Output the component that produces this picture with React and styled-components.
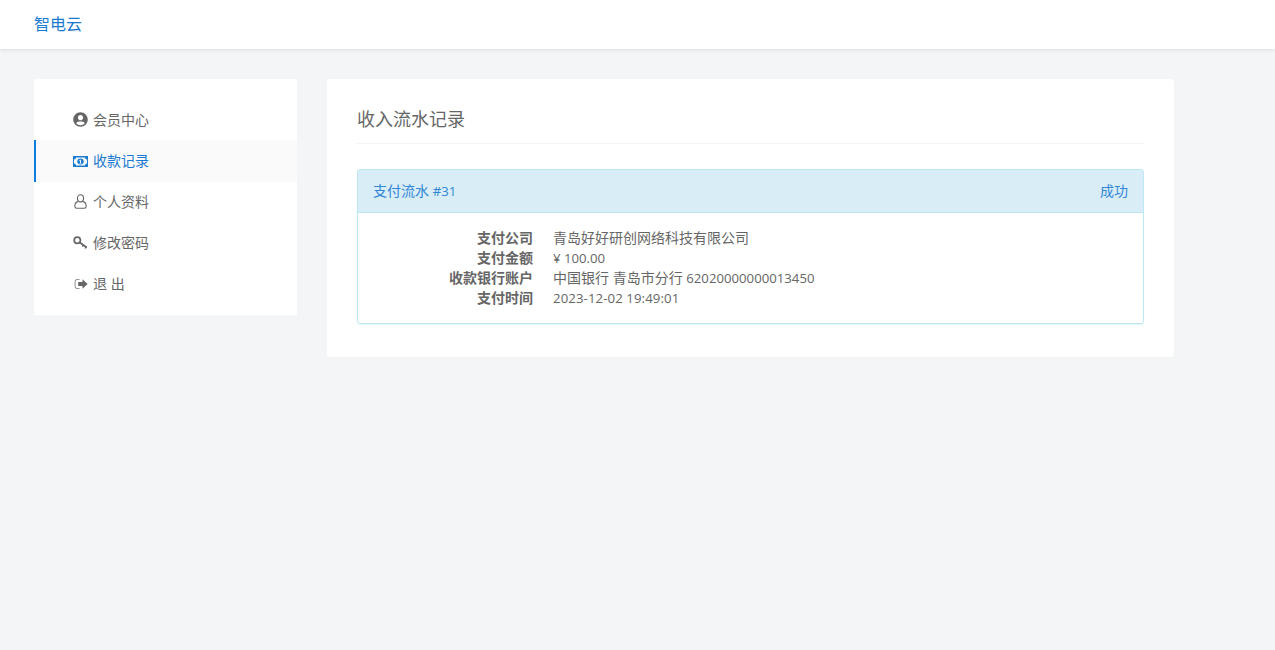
import React from 'react';
import styled, { createGlobalStyle } from 'styled-components';
import { FaUserCircle } from 'react-icons/fa';

const GlobalStyle = createGlobalStyle`
  html, body {
    margin: 0;
    height: 100%;
    background: #f4f5f7;
  }
  body {
    font-family: "Open Sans", "Noto Sans CJK SC", sans-serif;
    font-size: 14px;
    line-height: 20px;
    color: #666;
  }
`;

const Page = styled.div`
  min-height: 650px;
`;

const Header = styled.header`
  height: 49px;
  background: #fff;
  box-shadow: 0 1px 4px rgba(0, 0, 0, 0.1);
  display: flex;
  align-items: center;
  padding: 0 0 2px 34px;
  box-sizing: border-box;
`;

const Brand = styled.a`
  font-size: 16px;
  color: #1a7bd0;
`;

const Main = styled.main`
  display: flex;
  align-items: flex-start;
  gap: 30px;
  padding: 30px 0 0 34px;
`;

const Sidebar = styled.nav`
  width: 263px;
  background: #fff;
  padding: 20px 0 11px;
`;

const NavItem = styled.a`
  display: flex;
  align-items: center;
  gap: 5px;
  height: ${(p) => (p.$active ? '42px' : '41px')};
  margin-bottom: ${(p) => (p.$active ? '-1px' : '0')};
  padding-left: ${(p) => (p.$active ? '37px' : '39px')};
  border-left: ${(p) => (p.$active ? '2px solid #0d7be0' : 'none')};
  background: ${(p) => (p.$active ? '#fafafa' : 'transparent')};
  color: ${(p) => (p.$active ? '#1a7bd0' : '#666')};
`;

const NavIcon = styled.span`
  width: 15px;
  display: flex;
  justify-content: center;
  font-size: 15px;
`;

const Content = styled.section`
  width: 847px;
  box-sizing: border-box;
  background: #fff;
  border-radius: 3px;
  padding: 30px 30px 33px;
`;

const Title = styled.h2`
  margin: 0 0 25px;
  padding-bottom: 12px;
  height: 22px;
  font-size: 18px;
  line-height: 20px;
  font-weight: 400;
  color: #666;
  border-bottom: 1px solid #f3f3f3;
`;

const Card = styled.div`
  border: 1px solid #bce8f1;
  border-radius: 3px;
  box-shadow: 0 1px 1px rgba(188, 232, 241, 0.4);
`;

const CardHeader = styled.div`
  height: 43px;
  box-sizing: border-box;
  padding: 0 15px;
  display: flex;
  align-items: center;
  justify-content: space-between;
  background: #d9edf7;
  border-bottom: 1px solid #bce8f1;
  color: #2f86d6;
`;

const CardBody = styled.dl`
  margin: 0;
  padding: 15px;
  display: grid;
  grid-template-columns: 160px 1fr;
  column-gap: 20px;
`;

const Label = styled.dt`
  font-weight: 700;
  text-align: right;
`;

const Value = styled.dd`
  margin: 0;
`;

const Latin = styled.span`
  font-size: 13.2px;
`;

const DateText = styled(Latin)`
  letter-spacing: 0.1px;
`;

const MoneyIcon = () => (
  <svg width="15" height="11" viewBox="0 0 15 11" fill="currentColor">
    <path fillRule="evenodd" d="M0 0h15v11H0zM3 1.500C3 2.600 2.200 3.500 1 3.500v4c1.200 0 2 .9 2 2h9c0-1.100.8-2 2-2v-4c-1.200 0-2-.9-2-2z" />
    <ellipse cx="7.500" cy="5.500" rx="3.200" ry="3" />
    <path fill="#fafafa" d="M7 3.800h1v3.200h.6v.6H6.400V7H7V4.900l-.5.300-.3-.5z" />
  </svg>
);

const UserOutlineIcon = () => (
  <svg width="13" height="15" viewBox="0 0 13 15" fill="none" stroke="currentColor" strokeWidth="1.100">
    <ellipse cx="6.500" cy="4.300" rx="3.100" ry="3.600" />
    <path d="M4 7.600C2 8 .9 9.600.9 11.800v.7c0 1 .7 1.700 1.700 1.700h7.800c1 0 1.700-.7 1.700-1.700v-.7C12.100 9.600 11 8 9 7.600" />
  </svg>
);

const KeyIcon = () => (
  <svg width="15" height="13" viewBox="0 0 15 13" fill="none" stroke="currentColor">
    <circle cx="4.300" cy="4.300" r="3.100" strokeWidth="1.700" />
    <path d="M6.800 6.600 13.800 11.400" strokeWidth="1.800" />
    <path d="M10.300 9 9.300 10.700M13 10.800 12 12.500" strokeWidth="1.400" />
  </svg>
);

const SignOutIcon = () => (
  <svg width="14" height="12" viewBox="0 0 14 12" fill="currentColor">
    <path opacity="0.7" d="M5.500 1H3C1.600 1 .6 2 .6 3.400v5.200C.6 10 1.600 11 3 11h2.500V10H3c-.7 0-1.400-.7-1.400-1.400V3.400C1.600 2.700 2.300 2 3 2h2.500z" />
    <path d="M8.500 1.200 13.600 6l-5.100 4.800V8H4.200V4h4.300z" />
  </svg>
);

const navItems = [
  { text: '会员中心', icon: <FaUserCircle /> },
  { text: '收款记录', icon: <MoneyIcon />, active: true },
  { text: '个人资料', icon: <UserOutlineIcon /> },
  { text: '修改密码', icon: <KeyIcon /> },
  { text: '退 出', icon: <SignOutIcon /> },
];

const details = [
  ['支付公司', '青岛好好研创网络科技有限公司'],
  ['支付金额', <Latin>¥ 100.00</Latin>],
  ['收款银行账户', <>中国银行 青岛市分行 <Latin>62020000000013450</Latin></>],
  ['支付时间', <DateText>2023-12-02 19:49:01</DateText>],
];

export default function App() {
  return (
    <Page>
      <GlobalStyle />
      <Header>
        <Brand>智电云</Brand>
      </Header>
      <Main>
        <Sidebar>
          {navItems.map((item) => (
            <NavItem key={item.text} $active={item.active}>
              <NavIcon>{item.icon}</NavIcon>
              {item.text}
            </NavItem>
          ))}
        </Sidebar>
        <Content>
          <Title>收入流水记录</Title>
          <Card>
            <CardHeader>
              <span>支付流水 <Latin>#31</Latin></span>
              <span>成功</span>
            </CardHeader>
            <CardBody>
              {details.map(([label, value]) => (
                <React.Fragment key={label}>
                  <Label>{label}</Label>
                  <Value>{value}</Value>
                </React.Fragment>
              ))}
            </CardBody>
          </Card>
        </Content>
      </Main>
    </Page>
  );
}
